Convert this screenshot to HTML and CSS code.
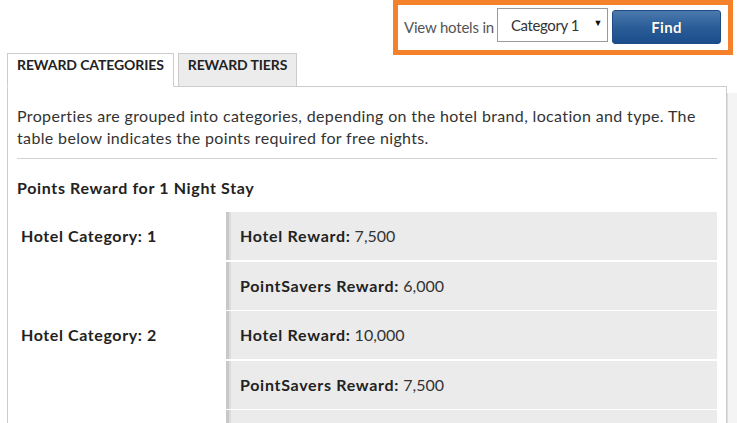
FILE: index.html
```html
<!DOCTYPE html>
<html>
<head>
<meta charset="utf-8">
<link rel="stylesheet" href="styles.css">
</head>
<body>
<div class="header">
  <div class="finder">
    <span class="finder-label">View hotels in</span>
    <div class="select"><span>Category 1</span><span class="arrow">&#9660;</span></div>
    <button class="find-btn">Find</button>
  </div>
</div>
<div class="body-row">
  <div class="main">
    <div class="tabs">
      <div class="tab active">REWARD CATEGORIES</div>
      <div class="tab">REWARD TIERS</div>
    </div>
    <div class="panel">
      <p class="intro">Properties are grouped into categories, depending on the hotel brand, location and type. The table below indicates the points required for free nights.</p>
      <div class="rule"></div>
      <h3 class="heading">Points Reward for 1 Night Stay</h3>
      <div class="group">
        <div class="cat">Hotel Category: 1</div>
        <div class="cells">
          <div class="cell"><b>Hotel Reward:</b> <span>7,500</span></div>
          <div class="cell"><b>PointSavers Reward:</b> <span>6,000</span></div>
        </div>
      </div>
      <div class="group">
        <div class="cat">Hotel Category: 2</div>
        <div class="cells">
          <div class="cell"><b>Hotel Reward:</b> <span>10,000</span></div>
          <div class="cell"><b>PointSavers Reward:</b> <span>7,500</span></div>
        </div>
      </div>
      <div class="group">
        <div class="cat"></div>
        <div class="cells">
          <div class="cell"></div>
        </div>
      </div>
    </div>
  </div>
  <div class="strip"></div>
</div>
</body>
</html>
```
FILE: styles.css
```css
html, body {
  margin: 0;
  padding: 0;
  height: 100%;
  overflow: hidden;
}
body {
  font-family: Lato, "Open Sans", sans-serif;
  color: #333;
  background: #fff;
}
.header {
  display: flex;
  justify-content: flex-end;
  padding-right: 4px;
  height: 53px;
}
.finder {
  box-sizing: border-box;
  height: 55px;
  width: 340px;
  border: 5px solid #f5822a;
  display: flex;
  align-items: flex-start;
  padding: 0 7px 0 6px;
  background: #fff;
  position: relative;
  z-index: 1;
}
.finder-label {
  font-size: 15px;
  color: #555;
  line-height: 20px;
  margin-top: 12px;
  letter-spacing: -0.2px;
  white-space: nowrap;
  margin-right: 3px;
}
.select {
  box-sizing: border-box;
  width: 112px;
  height: 34px;
  margin-top: 3px;
  border: 1px solid #9a9a9a;
  display: flex;
  align-items: center;
  justify-content: space-between;
  padding: 0 5px 0 13px;
  font-size: 15px;
  color: #333;
  letter-spacing: -0.4px;
}
.arrow {
  font-size: 9px;
  color: #111;
  margin-top: -6px;
}
.find-btn {
  box-sizing: border-box;
  width: 110px;
  height: 34px;
  margin-top: 5px;
  margin-left: 4px;
  border: 1px solid #1d4c86;
  border-radius: 3px;
  background: linear-gradient(#4a79ad, #2b5d98 50%, #1b4d8c);
  color: #fff;
  font-family: Lato, sans-serif;
  font-weight: bold;
  font-size: 15px;
  letter-spacing: 0.3px;
  text-shadow: 0 0 1px rgba(0,0,0,0.5);
  padding: 0;
}
.body-row {
  display: flex;
  align-items: stretch;
  height: 370px;
}
.main {
  width: 727px;
  padding-left: 7px;
  box-sizing: border-box;
}
.strip {
  flex: 1;
  margin-top: 40px;
  border-left: 1px solid #ddd;
  background: #f4f4f4;
}
.tabs {
  display: flex;
  gap: 4px;
  height: 34px;
  position: relative;
  z-index: 1;
  margin-bottom: -1px;
}
.tab {
  box-sizing: border-box;
  height: 34px;
  padding: 1px 9px 0 9px;
  border: 1px solid #ccc;
  background: #ececec;
  font-size: 14px;
  font-weight: bold;
  color: #222;
  line-height: 20px;
  letter-spacing: -0.1px;
}
.tab.active {
  background: #fff;
  border-bottom-color: #fff;
}
.panel {
  border: 1px solid #ccc;
  border-bottom: none;
  padding: 18px 9px 0 9px;
  height: 400px;
}
.intro {
  margin: 0;
  font-size: 16px;
  line-height: 22px;
  letter-spacing: 0.35px;
}
.rule {
  height: 1px;
  background: #d2d2d2;
  margin-top: 9px;
}
.heading {
  margin: 18px 0 0 0;
  font-size: 16px;
  line-height: 22px;
  font-weight: bold;
  color: #222;
  letter-spacing: 0.65px;
}
.group {
  display: flex;
  margin-top: 1.5px;
}
.heading + .group {
  margin-top: 13px;
}
.cat {
  width: 209px;
  padding: 13px 0 0 4px;
  box-sizing: border-box;
  font-size: 16px;
  line-height: 22px;
  font-weight: bold;
  color: #222;
  letter-spacing: 0.6px;
}
.cells {
  flex: 1;
  display: flex;
  flex-direction: column;
  gap: 1.5px;
}
.cell {
  box-sizing: border-box;
  height: 48px;
  line-height: 48px;
  background: #ebebeb;
  border-left: 3px solid #c8c8c8;
  box-shadow: inset 2px 0 0 #dcdcdc;
  padding-left: 11px;
  font-size: 16px;
  color: #333;
  white-space: nowrap;
}
.cell b {
  color: #222;
  letter-spacing: 0.7px;
}
.cell span {
  letter-spacing: 0;
}
```
